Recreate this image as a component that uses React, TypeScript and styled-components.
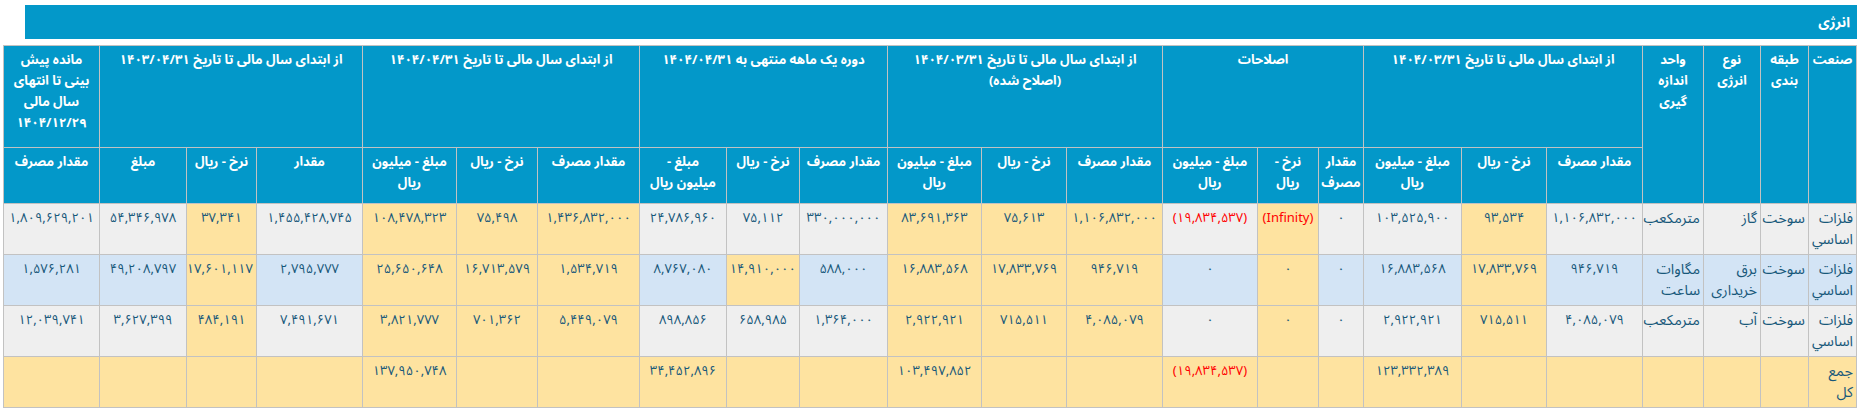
import styled, { createGlobalStyle } from "styled-components";

const GlobalStyle = createGlobalStyle`
  html, body {
    margin: 0;
    padding: 0;
    background: #ffffff;
  }
  body {
    font-family: "Noto Sans Arabic", "DejaVu Sans", "Noto Sans", sans-serif;
  }
`;

const Page = styled.div`
  direction: rtl;
  padding: 5px 6px 0 3px;
`;

const TitleBar = styled.div`
  height: 34px;
  margin-left: 22px;
  padding: 0 7px;
  display: flex;
  align-items: center;
  background: #0398c9;
  color: #ffffff;
  font-size: 14px;
  font-weight: bold;
`;

const Table = styled.table`
  margin-top: 6px;
  width: 1853px;
  border-collapse: collapse;
  table-layout: fixed;
  font-size: 13px;
`;

const HeadRow = styled.tr<{ h: number }>`
  height: ${(p) => p.h}px;
`;

const HeadCell = styled.th`
  background: #0398c9;
  color: #ffffff;
  font-size: 13px;
  font-weight: bold;
  border: 1px solid #c2c2c2;
  padding: 4px 2px 3px;
  line-height: 21px;
  white-space: pre;
  vertical-align: top;
  text-align: center;
`;

type Tone = "gray" | "blue" | "yellow";

const toneBg: Record<Tone, string> = {
  gray: "#efefef",
  blue: "#d3e4f5",
  yellow: "#fee3a0",
};

const BodyRow = styled.tr<{ tone: Tone }>`
  height: 51px;
  background: ${(p) => toneBg[p.tone]};
`;

const Cell = styled.td<{ hi?: boolean; red?: boolean; text?: boolean }>`
  border: 1px solid #c2c2c2;
  padding: 4px 3px 3px;
  line-height: 21px;
  vertical-align: top;
  font-size: ${(p) => (p.text ? "14.5px" : "13px")};
  text-align: ${(p) => (p.text ? "right" : "center")};
  white-space: ${(p) => (p.text ? "normal" : "nowrap")};
  color: ${(p) => (p.red ? "#ff0000" : "#17587a")};
  background: ${(p) => (p.hi ? toneBg.yellow : "transparent")};
`;

const widths = [
  48, 48, 57, 61, 96, 85, 98, 45, 61, 95, 96, 85, 94, 88, 73, 87, 102, 81, 94, 106, 70, 87, 96,
];

const fixedHeads = ["صنعت", "طبقه\nبندی", "نوع\nانرژی", "واحد\nاندازه\nگیری"];

const groups = [
  "از ابتدای سال مالی تا تاریخ ۱۴۰۴/۰۳/۳۱",
  "اصلاحات",
  "از ابتدای سال مالی تا تاریخ ۱۴۰۴/۰۳/۳۱\n(اصلاح شده)",
  "دوره یک ماهه منتهی به ۱۴۰۴/۰۴/۳۱",
  "از ابتدای سال مالی تا تاریخ ۱۴۰۴/۰۴/۳۱",
  "از ابتدای سال مالی تا تاریخ ۱۴۰۳/۰۴/۳۱",
];

const amount = "مبلغ - میلیون\nریال";

const subHeads = [
  "مقدار مصرف", "نرخ - ریال", amount,
  "مقدار\nمصرف", "نرخ -\nریال", amount,
  "مقدار مصرف", "نرخ - ریال", amount,
  "مقدار مصرف", "نرخ - ریال", "مبلغ -\nمیلیون ریال",
  "مقدار مصرف", "نرخ - ریال", amount,
  "مقدار", "نرخ - ریال", "مبلغ",
  "مقدار مصرف",
];

type CellData = { v: string; hi?: boolean; red?: boolean; text?: boolean };

// y = yellow highlight, r = red text, t = text column
const c = (v: string, flags = ""): CellData => ({
  v,
  hi: flags.includes("y"),
  red: flags.includes("r"),
  text: flags.includes("t"),
});

const rows: { tone: Tone; cells: CellData[] }[] = [
  {
    tone: "gray",
    cells: [
      c("فلزات اساسي", "t"), c("سوخت", "t"), c("گاز", "t"), c("مترمکعب", "t"),
      c("۱,۱۰۶,۸۳۲,۰۰۰"), c("۹۳,۵۳۴", "y"), c("۱۰۳,۵۲۵,۹۰۰"),
      c("۰"), c("(Infinity)", "yr"), c("(۱۹,۸۳۴,۵۳۷)", "r"),
      c("۱,۱۰۶,۸۳۲,۰۰۰", "y"), c("۷۵,۶۱۳", "y"), c("۸۳,۶۹۱,۳۶۳", "y"),
      c("۳۳۰,۰۰۰,۰۰۰"), c("۷۵,۱۱۲"), c("۲۴,۷۸۶,۹۶۰"),
      c("۱,۴۳۶,۸۳۲,۰۰۰", "y"), c("۷۵,۴۹۸", "y"), c("۱۰۸,۴۷۸,۳۲۳", "y"),
      c("۱,۴۵۵,۴۲۸,۷۴۵"), c("۳۷,۳۴۱", "y"), c("۵۴,۳۴۶,۹۷۸"),
      c("۱,۸۰۹,۶۲۹,۲۰۱"),
    ],
  },
  {
    tone: "blue",
    cells: [
      c("فلزات اساسي", "t"), c("سوخت", "t"), c("برق خریداری", "t"), c("مگاوات ساعت", "t"),
      c("۹۴۶,۷۱۹"), c("۱۷,۸۳۳,۷۶۹", "y"), c("۱۶,۸۸۳,۵۶۸"),
      c("۰"), c("۰", "y"), c("۰"),
      c("۹۴۶,۷۱۹", "y"), c("۱۷,۸۳۳,۷۶۹", "y"), c("۱۶,۸۸۳,۵۶۸", "y"),
      c("۵۸۸,۰۰۰"), c("۱۴,۹۱۰,۰۰۰", "y"), c("۸,۷۶۷,۰۸۰"),
      c("۱,۵۳۴,۷۱۹", "y"), c("۱۶,۷۱۳,۵۷۹", "y"), c("۲۵,۶۵۰,۶۴۸", "y"),
      c("۲,۷۹۵,۷۷۷"), c("۱۷,۶۰۱,۱۱۷", "y"), c("۴۹,۲۰۸,۷۹۷"),
      c("۱,۵۷۶,۲۸۱"),
    ],
  },
  {
    tone: "gray",
    cells: [
      c("فلزات اساسي", "t"), c("سوخت", "t"), c("آب", "t"), c("مترمکعب", "t"),
      c("۴,۰۸۵,۰۷۹"), c("۷۱۵,۵۱۱", "y"), c("۲,۹۲۲,۹۲۱"),
      c("۰"), c("۰", "y"), c("۰"),
      c("۴,۰۸۵,۰۷۹", "y"), c("۷۱۵,۵۱۱", "y"), c("۲,۹۲۲,۹۲۱", "y"),
      c("۱,۳۶۴,۰۰۰"), c("۶۵۸,۹۸۵"), c("۸۹۸,۸۵۶"),
      c("۵,۴۴۹,۰۷۹", "y"), c("۷۰۱,۳۶۲", "y"), c("۳,۸۲۱,۷۷۷", "y"),
      c("۷,۴۹۱,۶۷۱"), c("۴۸۴,۱۹۱", "y"), c("۳,۶۲۷,۳۹۹"),
      c("۱۲,۰۳۹,۷۴۱"),
    ],
  },
  {
    tone: "yellow",
    cells: [
      c("جمع کل", "t"), c(""), c(""), c(""),
      c(""), c(""), c("۱۲۳,۳۳۲,۳۸۹"),
      c(""), c(""), c("(۱۹,۸۳۴,۵۳۷)", "r"),
      c(""), c(""), c("۱۰۳,۴۹۷,۸۵۲"),
      c(""), c(""), c("۳۴,۴۵۲,۸۹۶"),
      c(""), c(""), c("۱۳۷,۹۵۰,۷۴۸"),
      c(""), c(""), c(""),
      c(""),
    ],
  },
];

export default function App() {
  return (
    <>
      <GlobalStyle />
      <Page>
        <TitleBar>انرژی</TitleBar>
        <Table>
          <colgroup>
            {widths.map((w, i) => (
              <col key={i} style={{ width: w }} />
            ))}
          </colgroup>
          <thead>
            <HeadRow h={102}>
              {fixedHeads.map((h) => (
                <HeadCell key={h} rowSpan={2}>
                  {h}
                </HeadCell>
              ))}
              {groups.map((g) => (
                <HeadCell key={g} colSpan={3}>
                  {g}
                </HeadCell>
              ))}
              <HeadCell>{"مانده پیش\nبینی تا انتهای\nسال مالی\n۱۴۰۴/۱۲/۲۹"}</HeadCell>
            </HeadRow>
            <HeadRow h={56}>
              {subHeads.map((s, i) => (
                <HeadCell key={i}>{s}</HeadCell>
              ))}
            </HeadRow>
          </thead>
          <tbody>
            {rows.map((r, ri) => (
              <BodyRow key={ri} tone={r.tone}>
                {r.cells.map((cell, ci) => (
                  <Cell key={ci} hi={cell.hi} red={cell.red} text={cell.text}>
                    {cell.v}
                  </Cell>
                ))}
              </BodyRow>
            ))}
          </tbody>
        </Table>
      </Page>
    </>
  );
}
